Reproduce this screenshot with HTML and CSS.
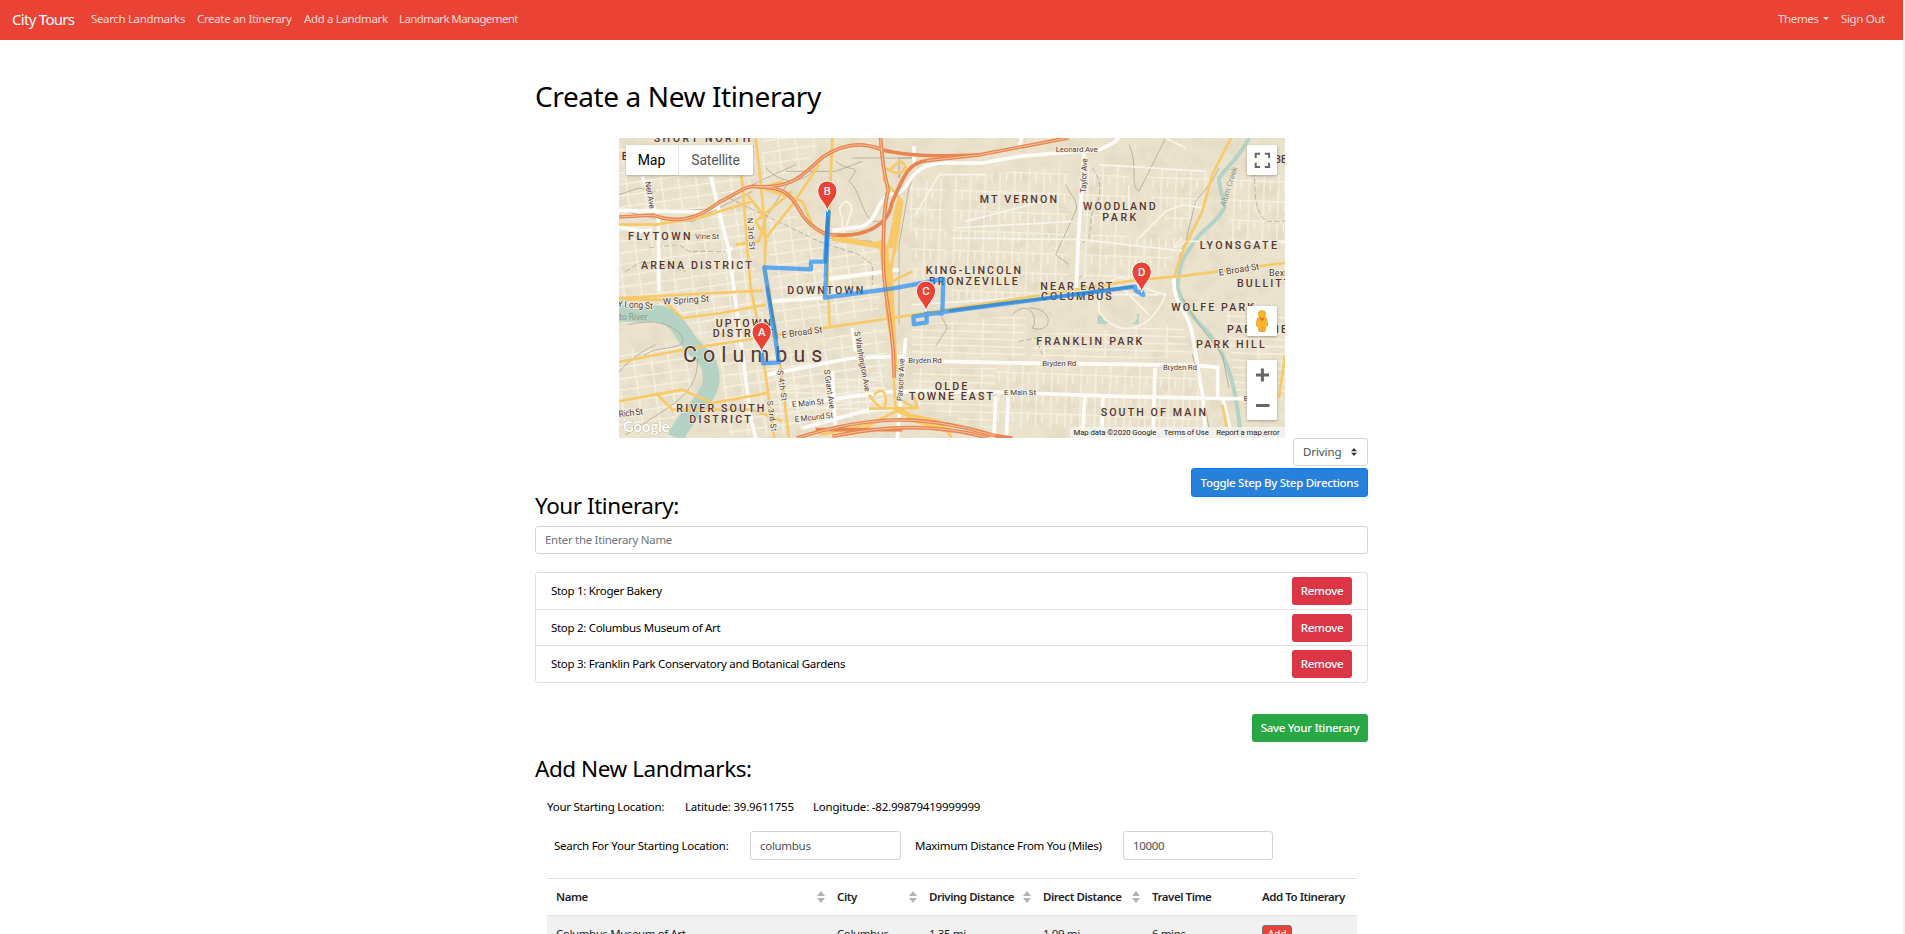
FILE: index.html
```html
<!DOCTYPE html>
<html lang="en">
<head>
<meta charset="utf-8">
<title>City Tours</title>
<link rel="stylesheet" href="styles.css">
</head>
<body>
<div class="app">
  <nav class="navbar">
    <a class="brand">City Tours</a>
    <a class="link n1">Search Landmarks</a>
    <a class="link n2">Create an Itinerary</a>
    <a class="link n3">Add a Landmark</a>
    <a class="link n4">Landmark Management</a>
    <span class="spacer"></span>
    <a class="link themes">Themes<i class="caret"></i></a>
    <a class="link signout">Sign Out</a>
  </nav>
  <main class="page">
    <h1 class="title">Create a New Itinerary</h1>
    <div class="map">
      <svg class="map-canvas" viewBox="0 0 1998 900" width="666" height="300">
        <defs>
          <pattern id="gridA" width="52" height="34" patternUnits="userSpaceOnUse" patternTransform="rotate(-8)"><path d="M0 2H52M3 0V34" class="street"/></pattern>
          <pattern id="gridB" width="44" height="60" patternUnits="userSpaceOnUse" patternTransform="rotate(2)"><path d="M0 2H44M3 0V60M22 2V30" class="street"/></pattern>
          <pattern id="gridC" width="92" height="22" patternUnits="userSpaceOnUse" patternTransform="rotate(1.5)"><path d="M0 2H92M3 0V22" class="street"/></pattern>
          <filter id="relief" x="0" y="0" width="100%" height="100%">
            <feTurbulence type="fractalNoise" baseFrequency="0.022" numOctaves="3" seed="8"/>
            <feColorMatrix values="0 0 0 0 .62  0 0 0 0 .56  0 0 0 0 .42  1.6 0 0 0 -.68"/>
          </filter>
          <g id="pin"><path d="M0 0C-3-24-29-38-29-63A29 29 0 0 1 29-63C29-38 3-24 0 0Z" fill="#ea4335" stroke="#fff" stroke-width="3"/></g>
        </defs>
        <rect width="1998" height="900" fill="#ebe3cd"/>
        <rect width="1998" height="900" filter="url(#relief)" opacity=".4"/>
        <path fill="url(#gridA)" d="M0 30H140L260 0H400L410 130L230 220L0 215ZM0 260L240 255L400 180L410 390L450 640L800 560V820L480 890H330L300 640L130 520L0 480ZM0 640L220 600V750L150 870H0ZM440 250L520 220L600 310L780 330V520L640 560L480 610ZM430 0H600L560 90L430 130Z"/>
        <path fill="url(#gridB)" d="M1000 120L1350 80V470L1000 500ZM1390 80L1530 90V300H1390ZM1400 300H1670L1650 420H1390ZM870 140L980 120V440H880ZM1580 90L1780 100L1690 300L1600 200ZM1830 110H1998V320H1830ZM1130 680H1730L1750 870H1130Z"/>
        <path fill="url(#gridC)" d="M880 560L1220 530V660H880ZM1240 590L1690 560L1720 660H1240ZM880 690H1130V880L890 800ZM1820 520H1998V780H1850ZM450 750L790 700V830H460Z"/>
        <g class="river">
          <path d="M0 526H110C150 526 180 560 205 605C245 660 280 655 276 735C265 790 200 830 170 898" stroke-width="50"/>
          <path d="M1890 0C1860 60 1820 90 1800 120C1800 160 1820 190 1816 210C1790 260 1750 270 1720 320C1680 370 1680 400 1675 450C1710 550 1770 570 1800 630C1830 690 1850 740 1866 900" stroke-width="12"/>
          <path d="M1435 535l12-7 8 20h12l-4 10h-28zM1533 558q26-4 20-30h8q-4 20 0 30z" class="pond"/>
        </g>
        <path class="contour" d="M28 560C110 540 170 560 190 600S90 620 70 660M235 660C240 750 180 790 100 840L20 890M0 700Q60 640 110 620M650 70C700 110 730 70 690 130C720 150 730 230 760 250L780 250M860 80L840 120V60H880M0 170L60 150L110 160M440 90C500 150 560 130 590 90M890 100L870 150L840 320V560M1340 140C1360 180 1380 190 1370 220L1310 350L1350 380M1530 20C1560 90 1530 140 1560 160L1610 60L1640 0M1800 90L1780 130L1730 190L1700 310L1680 360M1690 480L1740 560L1810 650L1830 750M1720 650L1750 760L1770 870M890 450L930 460L920 550M1180 530C1230 480 1260 540 1240 570C1300 590 1310 510 1230 510M960 520L985 570L950 625"/>
        <path class="contour dash" d="M1420 90C1450 130 1450 180 1420 220L1410 300L1370 330M1390 410L1340 470L1220 490M1900 100C1920 150 1890 190 1940 250H1998M90 330L180 320L210 340H320M20 400L70 370L200 400M1200 610L1250 600L1270 650M330 180L600 310L720 350L760 380V440"/>
        <path class="contour" d="M500 100H650L730 70M120 220L260 215L420 130L530 80M510 130L440 240M700 60H880M0 215L100 240L220 250L400 160M570 250L620 300L760 310"/>
        <g class="white-road">
          <path d="M0 217L250 222L300 205M70 115L118 245L120 460M275 115L330 340L395 840L410 900M0 265L60 280L100 275M320 340L340 330M1208 0L1200 35M1395 45L1378 300L1372 450M993 75H1090L1200 55L1440 35Q1480 20 1500 0M993 75C860 70 880 160 830 165C760 180 790 240 730 265L640 278"/>
          <path d="M445 710L700 660L840 655L880 668L1130 674L1730 682L1796 688V780M510 800L820 760L1130 762L1500 775L1900 783M860 600L835 900M700 570L710 640M550 870L750 815L820 812M1665 420C1660 500 1710 520 1720 590L1740 710L1752 780L1760 900M1608 690L1602 900M1397 775L1390 900M1452 775L1448 900M1168 775L1162 900M1130 775L1125 900M1812 783L1830 860L1825 900M640 700L650 900M460 490L610 480M610 425L840 395M885 25V90"/>
        </g>
        <g class="thin-white">
          <path d="M890 230L960 110L1100 110M1040 250L1310 180M1010 270L1360 250M1000 300L1390 305L1700 340M1440 80L1760 100M1560 300L1640 220L1690 200L1750 210M1690 300Q1640 350 1700 310H1998M1440 220H1530V140M1640 0L1700 30M880 500L1370 470M1440 460Q1490 400 1540 430T1640 470Q1600 560 1540 570T1440 520ZM1480 470H1620M1500 440L1590 530M670 300V240Q650 210 680 190Q710 200 690 240Z"/>
        </g>
        <g class="yellow-road">
          <path d="M0 485H130L190 540L310 525L440 500M0 480L430 458M0 672L220 630L480 590L820 540L1210 480L1560 425L1680 415L1840 395L1998 375M365 90L373 170L385 330L395 450L420 570L466 900M410 0L425 130L440 300L436 400L448 440L485 690L510 900M640 0L636 100L625 400L632 570M0 790L190 755L280 795L445 765M110 765L160 815H400L490 850M750 812L900 810M1836 0L1780 110L1750 220L1700 320Q1670 400 1665 415M1998 650L1980 780M1810 800L1830 900"/>
          <path d="M385 170L440 240L420 310L350 320M430 150L490 130M520 160L410 250L440 300L520 200L600 80M0 260H110L240 240L400 190M415 145L550 190L580 260L600 280L750 320L790 310M790 120L850 190L830 330L800 440M810 100Q850 50 860 90Q840 120 800 90M785 330L800 440L880 400M840 175L830 300L800 500L825 650M820 640L830 820L700 890M830 820L960 850L998 898M830 820Q740 870 600 890M765 770Q800 740 800 790T750 770M840 780Q920 840 880 770"/>
        </g>
        <g class="yellow-wide"><path d="M840 190L812 330M640 300L790 325M800 320L815 560M830 810L900 850L998 880M813 400L828 700"/></g>
        <g class="motorway">
          <path d="M0 237L103 231C180 260 240 240 303 191C350 170 380 140 413 146C510 146 520 180 553 236C590 280 620 292 653 291C740 296 810 260 818 196C850 130 860 75 923 68L1078 51L1348 0"/>
          <path d="M413 146C530 150 550 110 613 56C700 0 760 25 793 36Q880 60 1078 51M785 0Q790 90 808 156C790 220 793 340 793 376C795 460 810 500 823 640L826 720M533 900Q690 850 823 846T1128 893L1180 900M640 895Q900 840 1110 900M590 875L850 875"/>
        </g>
        <g class="motorway-light"><path d="M0 237L103 231C180 260 240 240 303 191C350 170 380 140 413 146C510 146 520 180 553 236C590 280 620 292 653 291M923 68L1078 51L1348 0M785 0Q790 90 808 156C790 220 793 340 793 376C795 460 810 500 823 640L826 720M533 900Q690 850 823 846T1128 893M640 895Q900 840 1110 900M413 146C530 150 550 110 613 56C700 0 760 25 793 36"/></g>
        <g class="labels" text-anchor="start">
          <text x="104" y="12" textLength="290">SHORT NORTH</text>
          <text x="104" y="48" textLength="300">ARTS DISTRICT</text>
          <text x="8" y="66">E</text>
          <text x="27" y="307" textLength="188">FLYTOWN</text>
          <text x="66" y="394" textLength="332">ARENA DISTRICT</text>
          <text x="505" y="468" textLength="228">DOWNTOWN</text>
          <text x="290" y="566" textLength="166">UPTOWN</text>
          <text x="281" y="598" textLength="182">DISTRICT</text>
          <text x="172" y="823" textLength="264">RIVER SOUTH</text>
          <text x="211" y="854" textLength="184">DISTRICT</text>
          <text x="1082" y="195" textLength="232">MT VERNON</text>
          <text x="1392" y="217" textLength="218">WOODLAND</text>
          <text x="1450" y="249" textLength="102">PARK</text>
          <text x="1742" y="332" textLength="232">LYONSGATE</text>
          <text x="1854" y="447" textLength="160">BULLITT</text>
          <text x="920" y="408" textLength="286">KING-LINCOLN</text>
          <text x="930" y="440" textLength="266">BRONZEVILLE</text>
          <text x="1264" y="456" textLength="216">NEAR EAST</text>
          <text x="1266" y="487" textLength="212">COLUMBUS</text>
          <text x="1657" y="519" textLength="248">WOLFE PARK</text>
          <text x="1824" y="584" textLength="180">PARK VIE</text>
          <text x="1731" y="631" textLength="206">PARK HILL</text>
          <text x="1252" y="620" textLength="318">FRANKLIN PARK</text>
          <text x="947" y="755" textLength="98">OLDE</text>
          <text x="870" y="787" textLength="252">TOWNE EAST</text>
          <text x="1445" y="834" textLength="316">SOUTH OF MAIN</text>
          <text x="1966" y="75">BE</text>
          <text class="city" x="192" y="671" textLength="418">Columbus</text>
        </g>
        <g class="road-labels">
          <text x="228" y="303" textLength="72">Vine St</text>
          <text transform="translate(78 132) rotate(80)" textLength="82">Neil Ave</text>
          <text transform="translate(385 240) rotate(86)" textLength="96">N 3rd St</text>
          <text class="big" transform="translate(133 500) rotate(-4)" textLength="138">W Spring St</text>
          <text class="big" transform="translate(-5 506) rotate(4)" textLength="106">Y Long St</text>
          <text class="big" transform="translate(490 600) rotate(-8)" textLength="122">E Broad St</text>
          <text class="big" transform="translate(1801 413) rotate(-9)" textLength="122">E Broad St</text>
          <text class="big" x="1950" y="414" textLength="80">Bexley</text>
          <text class="big" transform="translate(0 838) rotate(-7)" textLength="74">Rich St</text>
          <text transform="translate(475 698) rotate(82)" textLength="92">S 4th St</text>
          <text transform="translate(444 790) rotate(82)" textLength="92">S 3rd St</text>
          <text transform="translate(615 696) rotate(82)" textLength="118">S Grant Ave</text>
          <text transform="translate(706 582) rotate(80)" textLength="182">S Washington Ave</text>
          <text transform="translate(850 790) rotate(-87)" textLength="128">Parsons Ave</text>
          <text transform="translate(520 808) rotate(-6)" textLength="96">E Main St</text>
          <text transform="translate(528 853) rotate(-7)" textLength="116">E Mound St</text>
          <text x="868" y="675" textLength="100">Bryden Rd</text>
          <text x="1270" y="685" textLength="102">Bryden Rd</text>
          <text x="1632" y="695" textLength="102">Bryden Rd</text>
          <text x="1155" y="772" textLength="96">E Main St</text>
          <text x="1874" y="789">E Main St</text>
          <text x="1310" y="43" textLength="126">Leonard Ave</text>
          <text transform="translate(1400 165) rotate(-87)" textLength="104">Taylor Ave</text>
          <text class="water" transform="translate(1818 206) rotate(-72)" textLength="122">Alum Creek</text>
          <text class="water big" x="0" y="547" textLength="86">to River</text>
        </g>
        <g class="route">
          <path d="M428 644L432 676L480 673L436 388L576 394V371H618L628 221"/>
          <path d="M628 221L618 479L823 451L973 423L970 526H921M921 530L883 536L885 559L923 553V530L993 519L1548 446L1550 458L1573 471L1568 460"/>
          <path class="route-core" d="M445 450L474 600M626 240L620 370M993 518L1540 446"/>
        </g>
        <g class="pins">
          <use href="#pin" x="428" y="645"/><text x="428" y="594">A</text>
          <use href="#pin" x="625" y="221"/><text x="625" y="170">B</text>
          <use href="#pin" x="921" y="521"/><text x="921" y="470">C</text>
          <use href="#pin" x="1568" y="464"/><text x="1568" y="413">D</text>
        </g>
        <text class="logo" x="12" y="882" textLength="140" lengthAdjust="spacingAndGlyphs">Google</text>
      </svg>
      <div class="map-type"><span class="type-map">Map</span><span class="type-sat">Satellite</span></div>
      <div class="ctl fullscreen"><svg viewBox="0 0 30 30"><path d="M8.700 13V8.700H13M17.800 8.700H22.100V13M22.100 17.800V22.100H17.800M13 22.100H8.700V17.800" fill="none" stroke="#666" stroke-width="2"/></svg></div>
      <div class="ctl pegman"><svg viewBox="0 0 30 30"><path d="M10 14Q10 11.500 13 11.500H17Q20 11.500 20 14L20.800 19.500L18.800 20.500L18 25.500H12L11.200 20.500L9.200 19.500Z" fill="#fbb529" stroke="#d99227" stroke-width=".7"/><path d="M12 12L15 15.500L18 12Z" fill="#e5702a"/><circle cx="15" cy="8.300" r="3.800" fill="#fbb529" stroke="#d99227" stroke-width=".6"/><path d="M15 20V25.500" stroke="#d08b22" stroke-width=".8"/></svg></div>
      <div class="ctl zoom"><svg viewBox="0 0 30 60"><path d="M9 14.900H22M15.400 8.400V21.400M9 45.400H22.500" fill="none" stroke="#666" stroke-width="3"/></svg></div>
      <div class="attribution"><span>Map data ©2020 Google</span><span>Terms of Use</span><span>Report a map error</span></div>
    </div>
    <div class="mode"><div class="select"><span>Driving</span><svg width="6" height="8" viewBox="0 0 6 8"><path d="M3 0L6 3.200H0ZM3 8L0 4.800H6Z" fill="#343a40"/></svg></div></div>
    <div class="directions"><a class="btn primary">Toggle Step By Step Directions</a></div>
    <h2 class="heading itinerary">Your Itinerary:</h2>
    <div class="field name-field"><span>Enter the Itinerary Name</span></div>
    <ul class="stops">
      <li><span>Stop 1: Kroger Bakery</span><a class="btn danger">Remove</a></li>
      <li><span>Stop 2: Columbus Museum of Art</span><a class="btn danger">Remove</a></li>
      <li><span>Stop 3: Franklin Park Conservatory and Botanical Gardens</span><a class="btn danger">Remove</a></li>
    </ul>
    <div class="save-row"><a class="btn success">Save Your Itinerary</a></div>
    <h2 class="heading landmarks">Add New Landmarks:</h2>
    <div class="location"><span class="l1">Your Starting Location:</span><span class="l2">Latitude: 39.9611755</span><span class="l3">Longitude: -82.99879419999999</span></div>
    <div class="search">
      <label class="q1">Search For Your Starting Location:</label><div class="field f1"><span>columbus</span></div>
      <label class="q2">Maximum Distance From You (Miles)</label><div class="field f2"><span>10000</span></div>
    </div>
    <div class="table">
      <div class="row head">
        <div class="sortable"><span>Name</span><i class="sort"></i></div>
        <div class="sortable"><span>City</span><i class="sort"></i></div>
        <div class="sortable"><span>Driving Distance</span><i class="sort"></i></div>
        <div class="sortable"><span>Direct Distance</span><i class="sort"></i></div>
        <div><span>Travel Time</span></div>
        <div><span>Add To Itinerary</span></div>
      </div>
      <div class="row body">
        <div>Columbus Museum of Art</div><div>Columbus</div><div>1.35 mi</div><div>1.09 mi</div><div>6 mins</div><div><a class="add">Add</a></div>
      </div>
    </div>
  </main>
</div>
</body>
</html>
```
FILE: styles.css
```css
* { box-sizing: border-box; }
body { margin: 0; overflow: hidden; background: #fff; color: #000; font: 11.5px/18px "Noto Sans", sans-serif; letter-spacing: -0.3px; }
.app { height: 934px; overflow: hidden; border-right: 2px solid #f1f1f1; }
.navbar { display: flex; align-items: center; height: 40px; padding: 0 18px 2px 12px; background: #ea4335; color: #fff; white-space: nowrap; }
.brand { width: 79px; font-size: 15px; letter-spacing: -0.7px; }
.link { color: rgba(255, 255, 255, .8); letter-spacing: -0.35px; }
.n1 { width: 106px; }
.n2 { width: 107px; }
.n3 { width: 95px; }
.n4 { letter-spacing: -0.6px; }
.spacer { flex: 1; }
.themes { width: 63px; }
.signout { width: 44px; }
.caret { display: inline-block; margin-left: 4px; vertical-align: 3px; border: 3.5px solid transparent; border-top-color: currentColor; border-bottom: 0; }
.page { width: 833px; margin: 0 auto; white-space: nowrap; }
.title { margin: 0; padding-top: 36px; height: 98px; font-size: 28px; line-height: 40px; font-weight: 400; letter-spacing: -0.4px; }
.map { position: relative; width: 666px; height: 300px; margin: 0 auto; overflow: hidden; font-family: Roboto, sans-serif; letter-spacing: 0; }
.map-canvas { display: block; }
.street { fill: none; stroke: #f6f1e3; stroke-width: 4; }
.river path { fill: none; stroke: #b5d3c4; }
.river .pond { fill: #b5d3c4; stroke: none; }
.contour { fill: none; stroke: #a9a28f; stroke-width: 3; stroke-linejoin: round; opacity: .75; }
.dash { stroke-dasharray: 16 7; }
.white-road { fill: none; stroke: #fffdf9; stroke-width: 11; stroke-linejoin: round; }
.thin-white { fill: none; stroke: #f9f5ea; stroke-width: 5; }
.yellow-road { fill: none; stroke: #f8c967; stroke-width: 8; stroke-linejoin: round; }
.yellow-wide { fill: none; stroke: #f8c967; stroke-width: 16; }
.motorway { fill: none; stroke: #e98551; stroke-width: 11; stroke-linejoin: round; }
.motorway-light { fill: none; stroke: #f7c39c; stroke-width: 3; }
.labels text { font: 500 32px Roboto, sans-serif; fill: #523735; stroke: #efe7d2; stroke-width: 5; paint-order: stroke; }
.labels .city { font-size: 64px; font-weight: 400; }
.road-labels text { font: 24px Roboto, sans-serif; fill: #523735; stroke: #f5f1e6; stroke-width: 5; paint-order: stroke; }
.road-labels .big { font-size: 27px; }
.road-labels .water { fill: #92998d; stroke: none; }
.route path { fill: none; stroke: #1a8cff; stroke-opacity: .68; stroke-width: 13; stroke-linejoin: round; stroke-linecap: round; }
.route .route-core { stroke: #2675b8; stroke-opacity: .5; stroke-width: 9; }
.pins text { font: 500 34px Roboto, sans-serif; fill: #fff; text-anchor: middle; }
.logo { font: 700 46px Lato, sans-serif; fill: #fff; stroke: #a9a28f; stroke-width: 2; paint-order: stroke; }
.map-type { position: absolute; left: 7px; top: 7px; display: flex; height: 30px; background: #fff; border-radius: 1px; box-shadow: 0 1px 3px rgba(0, 0, 0, .25); font-size: 14px; line-height: 31px; text-align: center; }
.type-map { width: 53px; border-right: 1px solid #e9e9e9; color: #000; }
.type-sat { width: 74px; color: #565656; letter-spacing: -0.2px; }
.ctl { position: absolute; left: 628px; width: 30px; height: 30px; background: #fff; border-radius: 1px; box-shadow: 0 1px 3px rgba(0, 0, 0, .3); }
.ctl svg { display: block; width: 100%; height: 100%; }
.fullscreen { top: 7px; }
.pegman { top: 168px; }
.zoom { top: 222px; height: 60px; }
.attribution { position: absolute; right: 0; bottom: 0; display: flex; justify-content: space-between; width: 215px; height: 11px; padding: 0 5px 0 4px; background: rgba(245, 245, 245, .75); color: #222; font-size: 7.8px; line-height: 11px; letter-spacing: -0.1px; }
.mode, .directions, .save-row { display: flex; justify-content: flex-end; }
.select { display: flex; align-items: center; justify-content: space-between; width: 75px; height: 28px; padding: 0 10px 0 9px; border: 1px solid #ced4da; border-radius: 3px; color: #495057; letter-spacing: -.1px; }
.directions { margin-top: 2px; }
.btn { display: flex; align-items: center; justify-content: center; height: 28px; border-radius: 3px; color: #fff; font-weight: 500; }
.primary { width: 177px; height: 29px; background: #2780da; border: 1px solid #007bff; }
.heading { margin: 0; font-size: 22.5px; line-height: 28px; font-weight: 400; letter-spacing: -0.45px; }
.itinerary { margin-top: -5px; padding-bottom: 6px; }
.field { display: flex; align-items: center; height: 28px; padding: 0 9px; border: 1px solid #ced4da; border-radius: 3px; color: #495057; }
.name-field { color: #6c757d; }
.stops { list-style: none; margin: 18px 0 31px; padding: 0; height: 111px; border: 1px solid #dfdfdf; border-radius: 3px; display: grid; grid-template-rows: 37px 36px 36px; }
.stops li { display: flex; align-items: center; justify-content: space-between; padding: 0 15px; border-bottom: 1px solid #dfdfdf; }
.stops li:last-child { border-bottom: 0; }
.danger { width: 60px; background: #dc3545; }
.success { width: 116px; background: #28a745; }
.landmarks { margin-top: 13px; }
.location { display: flex; height: 18px; margin-top: 15px; padding-left: 12px; letter-spacing: -0.2px; }
.l1 { width: 138px; letter-spacing: -0.25px; }
.l2 { width: 128px; }
.search { display: flex; align-items: center; margin-top: 15px; padding-left: 19px; }
.search .field { height: 29px; }
.q1 { width: 196px; letter-spacing: -0.25px; }
.q2 { width: 208px; }
.f1 { width: 151px; margin-right: 14px; }
.f2 { width: 150px; }
.table { width: 810px; margin: 18px 0 0 12px; border-top: 1px solid #dee2e6; color: #212529; }
.row { display: grid; grid-template-columns: 281px 92px 114px 109px 110px 104px; padding-left: 9px; }
.head { height: 37px; align-items: center; border-bottom: 1px solid #dee2e6; font-weight: 600; letter-spacing: -0.45px; }
.sortable { display: flex; align-items: center; justify-content: space-between; padding-right: 12px; }
.sort { display: flex; flex-direction: column; gap: 2px; }
.sort::before, .sort::after { content: ""; border: 4px solid transparent; }
.sort::before { border-top: 0; border-bottom: 5px solid #b3b3b3; }
.sort::after { border-bottom: 0; border-top: 5px solid #b3b3b3; }
.body { height: 37px; padding-top: 9px; background: #f1f1f1; letter-spacing: -0.4px; }
.add { display: block; width: 30px; height: 21px; border: 1px solid #6c757d; border-radius: 3px; background: #ea4335; color: #fff; font-size: 10.5px; line-height: 17px; text-align: center; }
```
